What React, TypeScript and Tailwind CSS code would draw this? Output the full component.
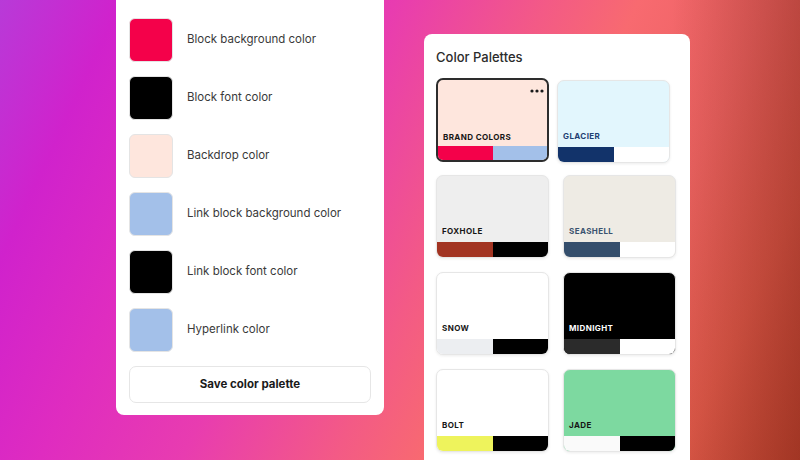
const swatches = [
  { label: 'Block background color', color: 'bg-[#f4014a]' },
  { label: 'Block font color', color: 'bg-black' },
  { label: 'Backdrop color', color: 'bg-[#fee6dd]' },
  { label: 'Link block background color', color: 'bg-[#a3c0e9]' },
  { label: 'Link block font color', color: 'bg-black' },
  { label: 'Hyperlink color', color: 'bg-[#a3c0e9]' },
];

type Palette = {
  name: string;
  bg: string;
  left: string;
  right: string;
  text: string;
  extra?: string;
  selected?: boolean;
};

const palettes: Palette[] = [
  { name: 'Brand colors', bg: 'bg-[#fee6dd]', left: 'bg-[#f4014a]', right: 'bg-[#a3c0e9]', text: 'text-[#161616]', selected: true },
  { name: 'Glacier', bg: 'bg-[#e2f6fd]', left: 'bg-[#12336a]', right: 'bg-white', text: 'text-[#1e3f72]', extra: '-ml-[6px] mt-[2px] -mb-[2px]' },
  { name: 'Foxhole', bg: 'bg-[#eeeeee]', left: 'bg-[#a23422]', right: 'bg-black', text: 'text-[#161616]' },
  { name: 'Seashell', bg: 'bg-[#eeebe4]', left: 'bg-[#344e6c]', right: 'bg-white', text: 'text-[#3b536f]' },
  { name: 'Snow', bg: 'bg-white', left: 'bg-[#eceef1]', right: 'bg-black', text: 'text-[#161616]' },
  { name: 'Midnight', bg: 'bg-black', left: 'bg-[#2b2b2b]', right: 'bg-white', text: 'text-white' },
  { name: 'Bolt', bg: 'bg-white', left: 'bg-[#eef35c]', right: 'bg-black', text: 'text-[#161616]' },
  { name: 'Jade', bg: 'bg-[#7dd9a0]', left: 'bg-[#fafafa]', right: 'bg-black', text: 'text-[#161616]' },
];

function PaletteCard({ p }: { p: Palette }) {
  return (
    <div
      className={`relative w-[113px] flex flex-col overflow-hidden rounded-[7px] ${p.bg} ${
        p.selected
          ? 'h-[84px] -mb-[1px] border-2 border-[#2d2d2d]'
          : 'h-[83px] border border-[#e6e6e6] shadow-[0_1px_3px_rgba(0,0,0,0.08)]'
      } ${p.extra ?? ''}`}
    >
      {p.selected && (
        <svg className="absolute top-[9px] right-[3px]" width="14" height="4" viewBox="0 0 14 4">
          <circle cx="2" cy="2" r="1.6" fill="#1a1a1a" />
          <circle cx="7" cy="2" r="1.6" fill="#1a1a1a" />
          <circle cx="12" cy="2" r="1.6" fill="#1a1a1a" />
        </svg>
      )}
      <div className={`flex-1 flex items-end px-[5px] ${p.selected ? 'pb-[4px]' : 'pb-[6px]'}`}>
        <span className={`text-[8px] leading-[10px] font-bold uppercase tracking-[0.05em] ${p.text}`}>{p.name}</span>
      </div>
      <div className={`flex ${p.selected ? 'h-[14px]' : 'h-[15px]'}`}>
        <div className={`flex-1 ${p.left}`} />
        <div className={`flex-1 ${p.right}`} />
      </div>
    </div>
  );
}

export default function App() {
  return (
    <main
      className="w-[800px] h-[460px] overflow-hidden flex items-start bg-[image:linear-gradient(to_right,transparent_84%,rgba(110,25,15,0.35)),linear-gradient(115deg,#b83ad8_0%,#d022cc_12%,#df2cc0_25%,#e83cb0_39%,#f35a86_54%,#f86a70_63%,#ea6260_76%,#db5848_88%,#bd452f_100%)]"
      style={{ fontFamily: 'Inter, "Noto Sans", sans-serif' }}
    >
      {/* Left: colour settings */}
      <section className="ml-[116px] -mt-[26px] w-[268px] bg-white rounded-[8px] px-[13px] pt-[10px] pb-[12px]">
        <h2 className="text-[13px] leading-[20px] font-medium text-[#2b2b2b]">Custom colors</h2>
        <div className="mt-[14px] flex flex-col gap-[14px]">
          {swatches.map((s) => (
            <div key={s.label} className="flex items-center gap-[14px]">
              <div className={`w-[44px] h-[44px] rounded-[6px] border border-[#e4e4e4] ${s.color}`} />
              <span className="text-[11.5px] text-[#3a3a3a]">{s.label}</span>
            </div>
          ))}
        </div>
        <button className="mt-[14px] w-full h-[37px] rounded-[7px] border border-[#e6e6e6] bg-white text-[11.5px] font-bold text-[#1a1a1a]">
          Save color palette
        </button>
      </section>

      {/* Right: palettes */}
      <section className="ml-[40px] mt-[34px] w-[266px] bg-white rounded-[8px] pl-[12px] pr-[14px] pt-[13px] pb-[40px]">
        <h2 className="text-[13px] leading-[20px] font-medium text-[#2b2b2b]">Color Palettes</h2>
        <div className="mt-[11px] grid grid-cols-[113px_113px] gap-x-[14px] gap-y-[14px]">
          {palettes.map((p) => (
            <PaletteCard key={p.name} p={p} />
          ))}
        </div>
      </section>
    </main>
  );
}
